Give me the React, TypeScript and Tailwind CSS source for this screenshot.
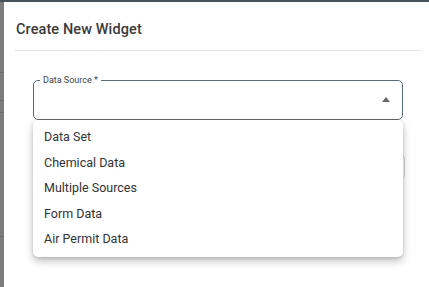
import React from "react";

const items = ["Data Set", "Chemical Data", "Multiple Sources", "Form Data", "Air Permit Data"];

export default function App() {
  return (
    <div
      className="relative w-[429px] h-[287px] overflow-hidden bg-[#7c7c7c] flex flex-col"
      style={{ fontFamily: "Roboto, 'Liberation Sans', sans-serif" }}
    >
      <div className="h-[2px] w-full bg-[#45535d] shrink-0" />
      <div className="flex-1 flex">
        {/* underlying page peeking out at the left */}
        <div className="w-[4px] flex flex-col">
          <div className="mt-[70px] h-px bg-[#6c6c6c]" />
          <div className="mt-[27px] h-px bg-[#6c6c6c]" />
          <div className="mt-[11px] h-px bg-[#6c6c6c]" />
          <div className="mt-[123px] h-px bg-[#6c6c6c]" />
        </div>
        <div className="flex-1 bg-white flex flex-col">
          <div className="h-[48px] flex items-center pl-[12px] pt-[7px]">
            <span className="text-[14.5px] font-medium text-[#3a3a3a] tracking-[0.1px]">Create New Widget</span>
          </div>
          <div className="ml-[11px] mr-[8px] h-px bg-[#e3e3e3]" />
          <div className="pl-[29px] pr-[26px] pt-[29px] flex flex-col">
            <div className="relative h-[40px] rounded-[5px] border border-[#5b6b77] flex items-center justify-end pr-[12px]">
              <span className="absolute left-[6px] top-[-7px] px-[3px] bg-white text-[9px] leading-[12px] text-[#444]">
                Data Source *
              </span>
              <svg width="8" height="5" viewBox="0 0 8 5" className="mt-[-2px]">
                <path d="M0 5 L4 0 L8 5 Z" fill="#6b6b6b" />
              </svg>
            </div>
            <div className="mt-[34px] mr-[-2px] h-[26px] rounded-[5px] border border-[#d6d6d6]" />
          </div>
        </div>
      </div>
      <div className="absolute left-[33px] top-[120px] w-[370px] h-[137px] bg-white rounded-[5px] shadow-[0_4px_8px_rgba(0,0,0,0.25),0_1px_3px_rgba(0,0,0,0.12)] pt-[5px] flex flex-col">
        {items.map((t) => (
          <div key={t} className="h-[25.5px] flex items-center pl-[11px] text-[12.5px] text-[#333333]">
            {t}
          </div>
        ))}
      </div>
    </div>
  );
}
